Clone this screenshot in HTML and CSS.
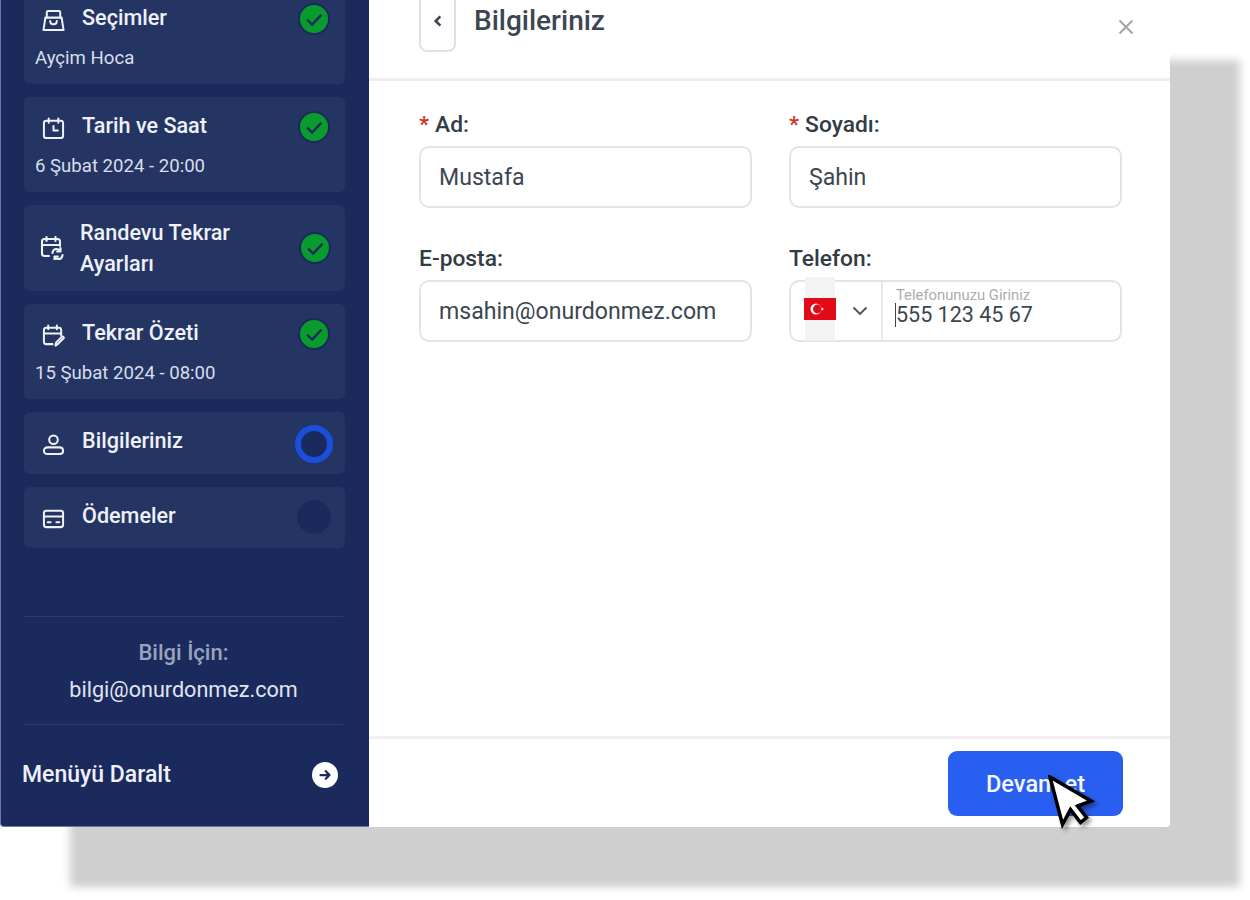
FILE: index.html
```html
<!DOCTYPE html>
<html lang="tr">
<head>
<meta charset="UTF-8" />
<title>Bilgileriniz</title>
<link rel="stylesheet" href="styles.css">
</head>
<body>

<div class="modal">

  <aside class="sidebar">
    <div class="steps">
      <div class="step">
        <div class="step-head">
          <svg class="step-icon" viewBox="0 0 24 24"><path d="M1.500 22 3.500 9h17l2 13z"/><path d="M5 9V3.500C5 2.600 5.600 2 6.500 2h11c.9 0 1.500.6 1.500 1.500V9"/><path d="M8.500 12.500c0 4.500 7 4.500 7 0"/></svg>
          <span class="step-title">Seçimler</span>
          <span class="status done"><svg viewBox="0 0 24 24"><path d="M6.500 12.500 10.500 16.500 18 8.500"/></svg></span>
        </div>
        <div class="step-sub">Ayçim Hoca</div>
      </div>

      <div class="step">
        <div class="step-head">
          <svg class="step-icon" viewBox="0 0 24 24"><rect x="2" y="4" width="20" height="18" rx="2.500"/><path d="M7 1.500V6M17 1.500V6"/><path d="M12 9.500V14h4.500"/></svg>
          <span class="step-title">Tarih ve Saat</span>
          <span class="status done"><svg viewBox="0 0 24 24"><path d="M6.500 12.500 10.500 16.500 18 8.500"/></svg></span>
        </div>
        <div class="step-sub">6 Şubat 2024 - 20:00</div>
      </div>

      <div class="step step-wide">
        <div class="step-head">
          <svg class="step-icon" viewBox="0 0 24 24"><path d="M9 20H4.500C3 20 2 19 2 17.500V5.500C2 4 3 3 4.500 3h13C19 3 20 4 20 5.500V10"/><path d="M6.500 1v4M15.500 1v4M2 9h18"/><path d="M12.500 17c.3-2.500 2-4 4.200-4 1.700 0 3 .9 3.800 2.300M20.500 12v3.500H17M22.500 19c-.3 2.500-2 4-4.200 4-1.700 0-3-.9-3.800-2.300M14.500 24v-3.500H18"/></svg>
          <span class="step-title">Randevu Tekrar<br>Ayarları</span>
          <span class="status done"><svg viewBox="0 0 24 24"><path d="M6.500 12.500 10.500 16.500 18 8.500"/></svg></span>
        </div>
      </div>

      <div class="step">
        <div class="step-head">
          <svg class="step-icon" viewBox="0 0 24 24"><path d="M11 21H4.500C3 21 2 20 2 18.500V6.500C2 5 3 4 4.500 4h13C19 4 20 5 20 6.500V12"/><path d="M6.500 1.500v4M15.500 1.500v4M2 10h18"/><path d="M14 22.500l.8-3.300 6-6c.8-.8 2.500.9 1.700 1.700l-6 6z"/></svg>
          <span class="step-title">Tekrar Özeti</span>
          <span class="status done"><svg viewBox="0 0 24 24"><path d="M6.500 12.500 10.500 16.500 18 8.500"/></svg></span>
        </div>
        <div class="step-sub">15 Şubat 2024 - 08:00</div>
      </div>

      <div class="step step-plain">
        <div class="step-head">
          <svg class="step-icon" viewBox="0 0 24 24"><circle cx="12" cy="7" r="4.500"/><path d="M6 15h12c2.500 0 4 1.500 4 3.500S20.500 22 18.500 22h-13C3.500 22 2 20.500 2 18.500S3.500 15 6 15z"/></svg>
          <span class="step-title">Bilgileriniz</span>
          <span class="status active"></span>
        </div>
      </div>

      <div class="step step-plain">
        <div class="step-head">
          <svg class="step-icon" viewBox="0 0 24 24"><rect x="2" y="4" width="20" height="17" rx="2.500"/><path d="M2 10h20M6 16h3M15 16h3"/></svg>
          <span class="step-title">Ödemeler</span>
          <span class="status pending"></span>
        </div>
      </div>
    </div>

    <div class="info">
      <div class="info-label">Bilgi İçin:</div>
      <div class="info-mail">bilgi@onurdonmez.com</div>
    </div>

    <div class="collapse">
      <span>Menüyü Daralt</span>
      <span class="collapse-btn"><svg viewBox="0 0 24 24"><path d="M6 12h12M13 7l5 5-5 5"/></svg></span>
    </div>
  </aside>

  <main class="panel">
    <header class="panel-head">
      <button class="back-btn"><svg viewBox="0 0 12 12"><path d="M8 2 4 6l4 4"/></svg></button>
      <h1 class="panel-title">Bilgileriniz</h1>
      <svg class="close-icon" viewBox="0 0 16 16"><path d="M1.500 1.500l13 13M14.500 1.500l-13 13"/></svg>
    </header>

    <form class="form">
      <div class="field">
        <label class="field-label"><span class="req">*</span>Ad:</label>
        <input class="field-input" type="text" value="Mustafa">
      </div>
      <div class="field">
        <label class="field-label"><span class="req">*</span>Soyadı:</label>
        <input class="field-input" type="text" value="Şahin">
      </div>
      <div class="field">
        <label class="field-label">E-posta:</label>
        <input class="field-input" type="text" value="msahin@onurdonmez.com">
      </div>
      <div class="field">
        <label class="field-label">Telefon:</label>
        <div class="phone">
          <div class="phone-country">
            <span class="flag-col">
              <svg class="flag" viewBox="0 0 32 22">
                <rect width="32" height="22" fill="#e30a17"/>
                <circle cx="12" cy="11" r="5.500" fill="#fff"/>
                <circle cx="13.400" cy="11" r="4.400" fill="#e30a17"/>
                <path d="M16.200 11l3.600-1.200-2.200 3.100v-3.800l2.200 3.100z" fill="#fff"/>
              </svg>
            </span>
            <svg class="chevron" viewBox="0 0 16 10"><path d="M1.500 1.500 8 8l6.500-6.500"/></svg>
          </div>
          <div class="phone-entry">
            <div class="phone-hint">Telefonunuzu Giriniz</div>
            <div class="phone-value">555 123 45 67</div>
          </div>
        </div>
      </div>
    </form>

    <footer class="panel-foot">
      <button class="next-btn">Devam et</button>
    </footer>
  </main>

  <svg class="cursor" viewBox="0 0 50 56"><path d="M5 2 17.500 49.500 25.500 34.500 35.500 47.500 41.500 42.500 32.500 31 46 26z"/></svg>
</div>

</body>
</html>
```

FILE: styles.css
```css
/* Reset & base */
*, *::before, *::after {
  box-sizing: border-box;
}
html, body {
  height: 100%;
}
body {
  margin: 0;
  background: #fff;
  overflow: hidden;
  font-family: Roboto, 'Liberation Sans', sans-serif;
}

/* Modal */
.modal {
  position: relative;
  display: flex;
  width: 1170px;
  height: 827px;
  background: #fff;
  border-bottom-right-radius: 4px;
  box-shadow: 70px 60px 8px #cfcfcf;
}

/* Sidebar */
.sidebar {
  display: flex;
  flex-direction: column;
  flex: 0 0 369px;
  background: #1a2a5c;
  border-left: 1px solid #6d7a9c;
  border-bottom: 1px solid #6d7a9c;
  border-bottom-left-radius: 4px;
  color: #fff;
}
.steps {
  display: flex;
  flex-direction: column;
  gap: 13px;
  margin: -11px 24px 0 23px;
}
.step {
  padding: 14px 12px 14px;
  background: #253563;
  border-radius: 6px;
}
.step-head {
  display: flex;
  align-items: center;
  min-height: 32px;
}
.step-icon {
  flex: none;
  width: 23px;
  height: 23px;
  margin: 2px 17px 0 6px;
  fill: none;
  stroke: #eef1f7;
  stroke-width: 2.100;
  stroke-linejoin: round;
  stroke-linecap: round;
}
.step-title {
  flex: 1;
  margin-bottom: 2px;
  font-size: 21.600px;
  font-weight: 500;
  line-height: 28px;
  color: #eef1f7;
}
.step-sub {
  margin: 11px 0 0 -1px;
  font-size: 18.600px;
  line-height: 24px;
  color: #d8deea;
}
.step-wide {
  padding: 12px;
}
.step-wide .step-icon {
  margin: 0 16px 0 4px;
  width: 24px;
  height: 24px;
}
.step-wide .step-title {
  margin-bottom: 0;
  line-height: 31px;
}
.step-wide .status {
  margin-right: 2px;
}
.step-plain {
  padding: 11.500px 12px;
}
.step-plain .step-head {
  min-height: 38px;
}
.step-plain .step-title {
  margin-bottom: 4px;
}

/* Status dots */
.status {
  flex: none;
  display: flex;
  align-items: center;
  justify-content: center;
  width: 32px;
  height: 32px;
  margin-right: 3px;
  border-radius: 50%;
}
.status.done {
  background: #0a9b2f;
  border: 2px solid #1a2a5c;
}
.status.done svg {
  flex: none;
  width: 30px;
  height: 30px;
  fill: none;
  stroke: #1a2a5c;
  stroke-width: 1.800;
}
.status.active {
  width: 38px;
  height: 38px;
  margin: 1px 0 0 0;
  background: #1a2a5c;
  border: 6px solid #1a4fdc;
}
.status.pending {
  width: 34px;
  height: 34px;
  margin: -2px 2px 0 0;
  background: #1a2a5c;
}

/* Sidebar bottom */
.info {
  margin: auto 26px 0 23px;
  padding: 21px 0 19px;
  border-top: 1px solid #2b3b6b;
  border-bottom: 1px solid #2b3b6b;
  text-align: center;
}
.info-label {
  font-size: 22px;
  font-weight: 500;
  line-height: 30px;
  color: #98a3bd;
}
.info-mail {
  margin-top: 7px;
  font-size: 21.600px;
  line-height: 30px;
  color: #e0e5f0;
}
.collapse {
  display: flex;
  align-items: center;
  justify-content: space-between;
  padding: 37px 31px 38px 21px;
  font-size: 23px;
  font-weight: 500;
  line-height: 26px;
  color: #eef1f7;
}
.collapse-btn {
  display: flex;
  align-items: center;
  justify-content: center;
  width: 26px;
  height: 26px;
  background: #fff;
  border-radius: 50%;
}
.collapse-btn svg {
  width: 18px;
  height: 18px;
  fill: none;
  stroke: #1a2a5c;
  stroke-width: 3;
  stroke-linecap: round;
  stroke-linejoin: round;
}

/* Main panel */
.panel {
  display: flex;
  flex-direction: column;
  flex: 1;
  min-width: 0;
}
.panel-head {
  display: flex;
  align-items: flex-start;
  flex: none;
  height: 81px;
  padding-left: 50px;
  border-bottom: 3px solid #eeeeef;
}
.back-btn {
  display: flex;
  align-items: center;
  justify-content: center;
  flex: none;
  width: 37px;
  height: 62px;
  margin-top: -10px;
  padding: 0;
  background: #fff;
  border: 2px solid #dfe1e4;
  border-radius: 8px;
}
.back-btn svg {
  width: 14px;
  height: 14px;
  fill: none;
  stroke: #3a4553;
  stroke-width: 2.200;
}
.panel-title {
  flex: 1;
  margin: 3px 0 0 18px;
  font-size: 28px;
  font-weight: 500;
  line-height: 36px;
  color: #3c4653;
}
.close-icon {
  flex: none;
  width: 16px;
  height: 16px;
  margin: 19px 36px 0 0;
  fill: none;
  stroke: #a2a5a9;
  stroke-width: 2;
}

/* Form */
.form {
  display: grid;
  grid-template-columns: 333px 333px;
  column-gap: 37px;
  row-gap: 36px;
  align-content: flex-start;
  flex: 1;
  padding: 29px 0 0 50px;
}
.field-label {
  display: block;
  margin-bottom: 7px;
  font-size: 22.800px;
  font-weight: 500;
  line-height: 29px;
  color: #323c45;
}
.req {
  margin-right: 6px;
  color: #d0342c;
}
.field-input {
  display: block;
  width: 100%;
  height: 62px;
  padding: 0 18px;
  background: #fff;
  border: 2px solid #e3e4e6;
  border-radius: 10px;
  outline: none;
  font-family: inherit;
  font-size: 23.100px;
  color: #3c4650;
}

/* Phone */
.phone {
  display: flex;
  height: 62px;
  background: #fff;
  border: 2px solid #e3e4e6;
  border-radius: 10px;
}
.phone-country {
  display: flex;
  align-items: center;
  flex: none;
  width: 92px;
  padding-left: 14px;
  border-right: 2px solid #e8e9eb;
}
.flag-col {
  display: flex;
  align-items: center;
  width: 30px;
  height: 64px;
  margin-top: -5px;
  background: #f3f3f4;
}
.flag {
  flex: none;
  width: 32px;
  height: 22px;
  margin: 0 0 0 -1px;
}
.chevron {
  width: 16px;
  height: 10px;
  margin: 0 0 0 17px;
  fill: none;
  stroke: #4a525c;
  stroke-width: 1.800;
}
.phone-entry {
  flex: 1;
  padding: 5px 0 0 13px;
}
.phone-hint {
  font-size: 14.800px;
  line-height: 16px;
  color: #a9adb2;
}
.phone-value {
  display: inline-block;
  margin-left: -1px;
  border-left: 1px solid #3c4650;
  font-size: 21.500px;
  line-height: 24px;
  color: #3c4650;
}

/* Footer */
.panel-foot {
  display: flex;
  justify-content: flex-end;
  flex: none;
  height: 91px;
  padding: 12px 47px 0 0;
  border-top: 3px solid #f0f0f1;
}
.next-btn {
  width: 175px;
  height: 65px;
  padding: 0;
  background: #285ff0;
  border: none;
  border-radius: 9px;
  font-family: inherit;
  font-size: 23.600px;
  font-weight: 500;
  color: #f4f7ff;
}

/* Mouse pointer over the button */
.cursor {
  position: absolute;
  left: 1045px;
  top: 775px;
  width: 50px;
  height: 56px;
  fill: #fff;
  stroke: #000;
  stroke-width: 3.500;
  stroke-linejoin: miter;
  filter: drop-shadow(3px 3px 2px rgba(0,0,0,0.4));
}
```
